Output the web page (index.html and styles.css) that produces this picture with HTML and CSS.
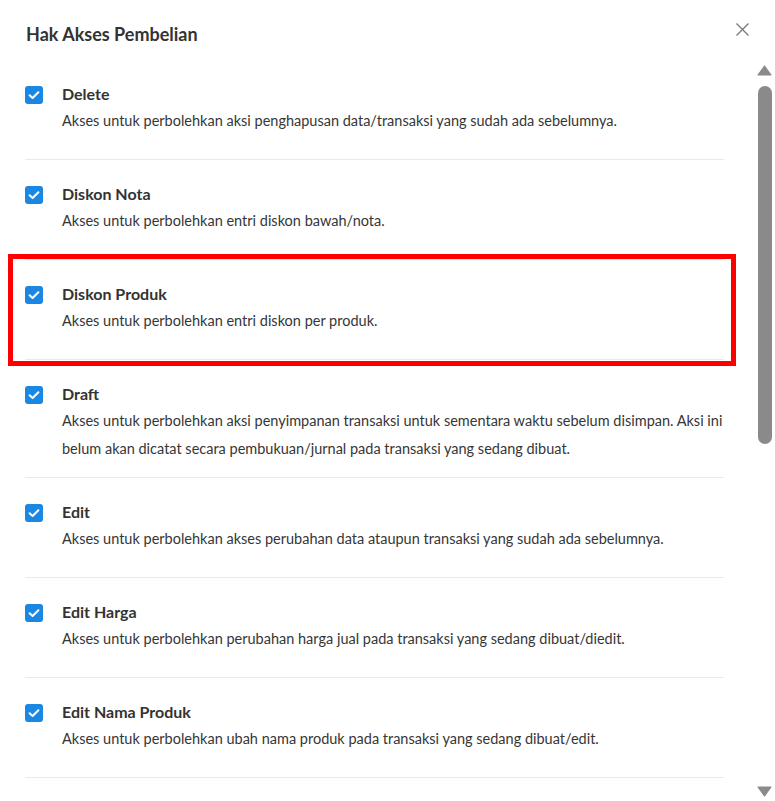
FILE: index.html
```html
<!DOCTYPE html>
<html lang="id">
<head>
<meta charset="utf-8">
<title>Hak Akses Pembelian</title>
<link rel="stylesheet" href="styles.css">
</head>
<body>
<div class="dialog">
  <div class="header">
    <h1 class="title">Hak Akses Pembelian</h1>
    <button class="close" aria-label="Tutup">
      <svg width="13" height="13" viewBox="0 0 13 13"><path d="M0.5 0.5 L12.5 12.5 M12.5 0.5 L0.5 12.5" stroke="#7a7a7a" stroke-width="1.4" fill="none"/></svg>
    </button>
  </div>
  <div class="body">
    <ul class="list">
      <li class="item">
        <span class="check"><svg width="18" height="18" viewBox="0 0 18 18"><path d="M4.6 9.2 L7.6 12 L13.4 6.2" stroke="#fff" stroke-width="2" fill="none" stroke-linecap="round" stroke-linejoin="round"/></svg></span>
        <div class="text">
          <div class="name">Delete</div>
          <div class="desc">Akses untuk perbolehkan aksi penghapusan data/transaksi yang sudah ada sebelumnya.</div>
        </div>
      </li>
      <li class="item">
        <span class="check"><svg width="18" height="18" viewBox="0 0 18 18"><path d="M4.6 9.2 L7.6 12 L13.4 6.2" stroke="#fff" stroke-width="2" fill="none" stroke-linecap="round" stroke-linejoin="round"/></svg></span>
        <div class="text">
          <div class="name">Diskon Nota</div>
          <div class="desc">Akses untuk perbolehkan entri diskon bawah/nota.</div>
        </div>
      </li>
      <li class="item">
        <span class="check"><svg width="18" height="18" viewBox="0 0 18 18"><path d="M4.6 9.2 L7.6 12 L13.4 6.2" stroke="#fff" stroke-width="2" fill="none" stroke-linecap="round" stroke-linejoin="round"/></svg></span>
        <div class="text">
          <div class="name">Diskon Produk</div>
          <div class="desc">Akses untuk perbolehkan entri diskon per produk.</div>
        </div>
      </li>
      <li class="item">
        <span class="check"><svg width="18" height="18" viewBox="0 0 18 18"><path d="M4.6 9.2 L7.6 12 L13.4 6.2" stroke="#fff" stroke-width="2" fill="none" stroke-linecap="round" stroke-linejoin="round"/></svg></span>
        <div class="text">
          <div class="name">Draft</div>
          <div class="desc">Akses untuk perbolehkan aksi penyimpanan transaksi untuk sementara waktu sebelum disimpan. Aksi ini belum akan dicatat secara pembukuan/jurnal pada transaksi yang sedang dibuat.</div>
        </div>
      </li>
      <li class="item">
        <span class="check"><svg width="18" height="18" viewBox="0 0 18 18"><path d="M4.6 9.2 L7.6 12 L13.4 6.2" stroke="#fff" stroke-width="2" fill="none" stroke-linecap="round" stroke-linejoin="round"/></svg></span>
        <div class="text">
          <div class="name">Edit</div>
          <div class="desc">Akses untuk perbolehkan akses perubahan data ataupun transaksi yang sudah ada sebelumnya.</div>
        </div>
      </li>
      <li class="item">
        <span class="check"><svg width="18" height="18" viewBox="0 0 18 18"><path d="M4.6 9.2 L7.6 12 L13.4 6.2" stroke="#fff" stroke-width="2" fill="none" stroke-linecap="round" stroke-linejoin="round"/></svg></span>
        <div class="text">
          <div class="name">Edit Harga</div>
          <div class="desc">Akses untuk perbolehkan perubahan harga jual pada transaksi yang sedang dibuat/diedit.</div>
        </div>
      </li>
      <li class="item">
        <span class="check"><svg width="18" height="18" viewBox="0 0 18 18"><path d="M4.6 9.2 L7.6 12 L13.4 6.2" stroke="#fff" stroke-width="2" fill="none" stroke-linecap="round" stroke-linejoin="round"/></svg></span>
        <div class="text">
          <div class="name">Edit Nama Produk</div>
          <div class="desc">Akses untuk perbolehkan ubah nama produk pada transaksi yang sedang dibuat/edit.</div>
        </div>
      </li>
    </ul>
    <div class="scrollbar">
      <svg class="arrow" width="15" height="11" viewBox="0 0 15 11"><path d="M7.5 1 L14 10 L1 10 Z" fill="#8a8a8a" stroke="#8a8a8a" stroke-width="1.2" stroke-linejoin="round"/></svg>
      <div class="thumb"></div>
      <div class="track-rest"></div>
      <svg class="arrow" width="15" height="11" viewBox="0 0 15 11"><path d="M1 1 L14 1 L7.5 10 Z" fill="#8a8a8a" stroke="#8a8a8a" stroke-width="1.2" stroke-linejoin="round"/></svg>
    </div>
  </div>
  <div class="highlight"></div>
</div>
</body>
</html>
```

FILE: styles.css
```css
html, body {
  margin: 0;
  padding: 0;
  background: #ffffff;
}

body {
  font-family: "Lato", "Liberation Sans", sans-serif;
  color: #333333;
}

.dialog {
  position: relative;
  width: 775px;
  height: 801px;
  overflow: hidden;
  display: flex;
  flex-direction: column;
}

.header {
  display: flex;
  justify-content: space-between;
  align-items: flex-start;
  padding: 22px 26px 14px 26px;
  height: 24px;
}

.title {
  margin: 0;
  font-size: 18px;
  line-height: 24px;
  font-weight: 700;
  color: #333333;
}

.close {
  border: 0;
  background: transparent;
  padding: 0;
  margin: 1px 0 0 0;
  width: 13px;
  height: 13px;
  display: block;
  cursor: pointer;
}

.close svg {
  display: block;
}

.body {
  flex: 1;
  display: flex;
  min-height: 0;
}

.list {
  list-style: none;
  margin: 0;
  padding: 0 33px 0 25px;
  flex: 1;
  min-width: 0;
}

.item {
  display: flex;
  align-items: flex-start;
  box-sizing: border-box;
  min-height: 100px;
  padding: 24px 0 14px 0;
  border-bottom: 1px solid #e9e9e9;
}

.check {
  flex: none;
  width: 18px;
  height: 18px;
  margin-top: 2px;
  border-radius: 3px;
  background: #1a87e3;
  display: block;
}

.check svg {
  display: block;
}

.text {
  margin-left: 19px;
  margin-right: -4px;
  flex: 1;
  min-width: 0;
}

.name {
  font-size: 16px;
  line-height: 20px;
  font-weight: 700;
  color: #333333;
}

.desc {
  margin-top: 3px;
  font-size: 14.5px;
  line-height: 28px;
  color: #363636;
}

.scrollbar {
  flex: none;
  width: 15px;
  margin-right: 3px;
  display: flex;
  flex-direction: column;
  align-items: center;
  padding: 5px 0 4px 0;
}

.arrow {
  display: block;
  flex: none;
}

.thumb {
  flex: none;
  width: 14px;
  height: 358px;
  margin-top: 10px;
  border-radius: 7px;
  background: #8a8a8a;
}

.track-rest {
  flex: 1;
}

.highlight {
  position: absolute;
  left: 8px;
  top: 254px;
  width: 728px;
  height: 112px;
  box-sizing: border-box;
  border: 5px solid #ff0000;
  pointer-events: none;
}
```
